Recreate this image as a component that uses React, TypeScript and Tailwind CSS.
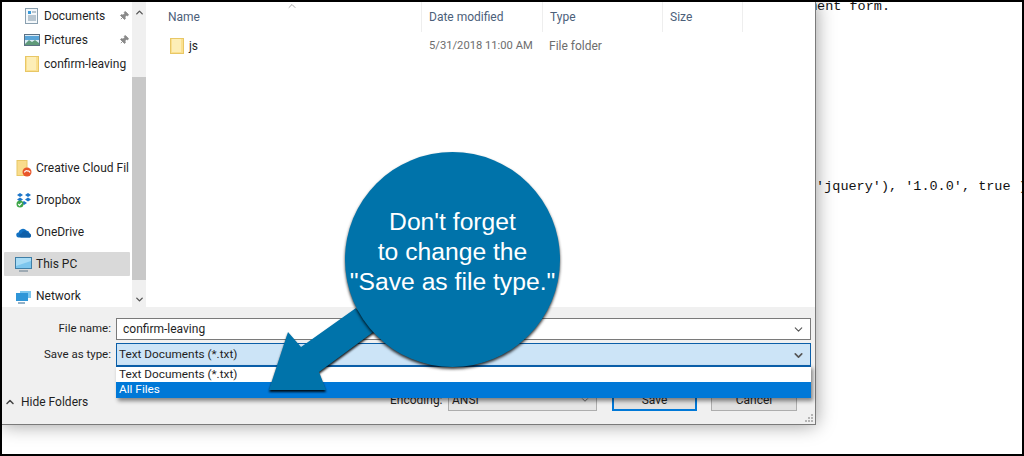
import { ChevronDown, ChevronUp, Pin } from "lucide-react"
import type { ReactNode } from "react"

const uiFont = { fontFamily: 'Roboto, "Open Sans", sans-serif' }

function FolderIcon({ size = 14 }: { size?: number }) {
  return (
    <svg width={size} height={size + 2} viewBox="0 0 14 16">
      <rect x="0.5" y="0.5" width="13" height="15" fill="#fbe08f" stroke="#e8c766" />
      <rect x="2" y="1" width="9" height="13" fill="#fdeeb7" />
    </svg>
  )
}

function DocumentsIcon() {
  return (
    <svg width="13" height="16" viewBox="0 0 13 16">
      <rect x="0.5" y="0.5" width="12" height="15" fill="#f4f8fb" stroke="#8aa0b0" />
      <path d="M3 3h3v3H3z" fill="#3a9ad9" />
      <path d="M7 4h4M3 8h8M3 10h8M3 12h8" stroke="#7d93a5" strokeWidth="1" />
    </svg>
  )
}

function PicturesIcon() {
  return (
    <svg width="16" height="12" viewBox="0 0 16 12">
      <rect x="0.5" y="0.5" width="15" height="11" fill="#dcecf7" stroke="#5c7184" />
      <path d="M1 2h14v4H1z" fill="#5aa5d8" />
      <path d="M1 10l4-4 3 2 3-2 4 3v2H1z" fill="#5f9a7a" />
    </svg>
  )
}

function CreativeCloudIcon() {
  return (
    <svg width="16" height="17" viewBox="0 0 16 17">
      <rect x="1" y="0.5" width="10" height="15" fill="#f9dc8c" stroke="#e8c766" />
      <circle cx="11" cy="12" r="4.5" fill="#e8562a" />
      <path d="M8.5 12.5a2 2 0 0 1 3-1.5 2 2 0 0 1 2.5 1.5" fill="none" stroke="#fff" strokeWidth="1.2" />
    </svg>
  )
}

function DropboxIcon() {
  return (
    <svg width="16" height="16" viewBox="0 0 16 16">
      <path d="M4 1l3 2-3 2-3-2zM12 1l3 2-3 2-3-2zM4 5.5l3 2-3 2-3-2zM12 5.5l3 2-3 2-3-2zM8 9l3 2-3 2-3-2z" fill="#1b75c9" />
      <circle cx="4" cy="12" r="3.5" fill="#3fa648" />
      <path d="M2.3 12l1.2 1.3 2.2-2.5" fill="none" stroke="#fff" strokeWidth="1.2" />
    </svg>
  )
}

function OneDriveIcon() {
  return (
    <svg width="16" height="11" viewBox="0 0 16 11">
      <path d="M3 10.5a2.5 2.5 0 0 1-.5-5A4.5 4.5 0 0 1 10.5 3.5a3.5 3.5 0 0 1 3 3.5 2 2 0 0 1 .5 3.5z" fill="#1272c4" />
      <path d="M5 10.5a2 2 0 0 1 .5-4 3.5 3.5 0 0 1 6.5-.5 2.5 2.5 0 0 1 2 4.5z" fill="#0f5fa8" />
    </svg>
  )
}

function ThisPcIcon() {
  return (
    <svg width="17" height="15" viewBox="0 0 17 15">
      <rect x="0.5" y="0.5" width="16" height="11" fill="#7cc6ee" stroke="#3f7ea6" />
      <path d="M1 1h15v3L1 9z" fill="#a8dcf6" />
      <path d="M4 14h9" stroke="#8a9aa6" strokeWidth="1.5" />
    </svg>
  )
}

function NetworkIcon() {
  return (
    <svg width="17" height="16" viewBox="0 0 17 16">
      <path d="M1 5h12v8H1z" fill="#2f96d8" />
      <path d="M5 3h11v7h-3V5H5z" fill="#7cc6ee" />
      <path d="M3 15h7" stroke="#4a7fa5" strokeWidth="1.2" />
    </svg>
  )
}

function NavItem({ icon, label, selected, compact }: { icon: ReactNode; label: string; selected?: boolean; compact?: boolean }) {
  return (
    <div className={`flex items-center overflow-hidden whitespace-nowrap text-[12px] text-[#1f1f1f] ${compact ? "h-6 pl-[17px]" : selected ? "my-[1px] ml-[2px] mr-[2px] h-6 rounded-[1px] bg-[#d9d9d9] pl-[7px]" : "mr-[3px] h-[26px] pl-[9px]"}`}>
      <span className="flex w-[25px] shrink-0 items-center justify-center">{icon}</span>
      {label}
    </div>
  )
}

function PinIcon() {
  return <Pin size={10} className="fill-[#8a8a8a] text-[#8a8a8a] rotate-45" />
}

function Column({ label, width }: { label: string; width: string }) {
  return (
    <div className={`flex h-[30px] items-center border-r border-[#eeeeee] pl-[7px] text-[12px] text-[#4c607a] ${width}`}>{label}</div>
  )
}

export default function App() {
  return (
    <div className="relative flex h-[456px] w-[1024px] overflow-hidden border-2 border-black bg-white" style={uiFont}>
      {/* save dialog */}
      <div className="relative z-10 flex h-[423px] w-[814px] shrink-0 flex-col border-b border-r border-[#7a7a7a] bg-white shadow-[0_0_18px_rgba(0,0,0,0.4)]">
        <div className="flex h-[305px]">
          <div className="w-[130px] overflow-hidden pt-[2px]">
            <div className="relative">
              <div className="flex items-center justify-between pr-[2px]">
                <div className="min-w-0 flex-1"><NavItem compact icon={<DocumentsIcon />} label="Documents" /></div>
                <span className="mr-[1px]"><PinIcon /></span>
              </div>
              <div className="flex items-center justify-between pr-[2px]">
                <div className="min-w-0 flex-1"><NavItem compact icon={<PicturesIcon />} label="Pictures" /></div>
                <span className="mr-[1px]"><PinIcon /></span>
              </div>
              <NavItem compact icon={<FolderIcon />} label="confirm-leaving" />
            </div>
            <div className="mt-[79px] flex flex-col gap-[6px]">
              <NavItem icon={<CreativeCloudIcon />} label="Creative Cloud Files" />
              <NavItem icon={<DropboxIcon />} label="Dropbox" />
              <NavItem icon={<OneDriveIcon />} label="OneDrive" />
              <NavItem selected icon={<ThisPcIcon />} label="This PC" />
              <NavItem icon={<NetworkIcon />} label="Network" />
            </div>
          </div>
          <div className="flex w-[14px] flex-col bg-[#f0f0f0]">
            <div className="flex h-[20px] items-center justify-center"><ChevronUp size={11} strokeWidth={3} className="text-[#555555]" /></div>
            <div className="mt-[55px] w-full flex-1 bg-[#c8c8c8]" />
            <div className="flex h-[27px] items-end justify-center pb-[2px]"><ChevronDown size={11} strokeWidth={3} className="text-[#555555]" /></div>
          </div>
          <div className="relative flex-1 pl-[15px]">
            <ChevronUp size={12} className="absolute left-[140px] top-[-2px] text-[#a8a8a8]" />
            <div className="flex">
              <Column label="Name" width="w-[261px]" />
              <Column label="Date modified" width="w-[121px]" />
              <Column label="Type" width="w-[120px]" />
              <Column label="Size" width="w-[80px]" />
            </div>
            <div className="mt-[2px] flex h-[24px] items-center text-[12px] text-[#6d6d6d]">
              <div className="flex w-[261px] items-center pl-[9px] text-[#1f1f1f]">
                <FolderIcon />
                <span className="ml-[5px]">js</span>
              </div>
              <div className="w-[121px] pl-[7px] text-[11.2px]">5/31/2018 11:00 AM</div>
              <div className="pl-[6px]">File folder</div>
            </div>
          </div>
        </div>

        <div className="relative flex-1 bg-[#f0f0f0] pr-[4px] pt-[11px]">
          <div className="flex h-[22px] items-center">
            <div className="w-[110px] pr-[1px] text-right text-[11.5px] text-[#1f1f1f]">File name:</div>
            <div className="ml-[4px] flex h-full flex-1 items-center justify-between border border-[#7a7a7a] bg-white pl-[6px] pr-[5px] text-[12px] text-[#1f1f1f]">
              confirm-leaving
              <ChevronDown size={13} className="text-[#555555]" />
            </div>
          </div>
          <div className="mt-[3px] flex h-[24px] items-center">
            <div className="w-[110px] pr-[1px] text-right text-[11.5px] text-[#1f1f1f]">Save as type:</div>
            <div className="ml-[4px] flex h-full flex-1 items-center justify-between border border-[#0a5ea8] bg-[#cce4f7] pl-[2px] pr-[5px] text-[11.8px] text-[#1f1f1f]">
              Text Documents (*.txt)
              <ChevronDown size={13} strokeWidth={3} className="text-[#555555]" />
            </div>
          </div>
          <div className="mt-[22px] flex h-[22px] items-center text-[12px] text-[#1f1f1f]">
            <div className="flex w-[388px] items-center pl-[2px] pt-[4px]">
              <ChevronUp size={12} strokeWidth={3} className="text-[#444444]" />
              <span className="ml-[5px]">Hide Folders</span>
            </div>
            <span className="w-[58px]">Encoding:</span>
            <div className="flex h-full w-[149px] items-center justify-between border border-[#adadad] bg-[#e5e5e5] pl-[3px] pr-[6px]">
              ANSI
              <ChevronDown size={10} className="text-[#555555]" />
            </div>
            <button className="ml-[15px] h-full w-[85px] border-2 border-[#0078d7] bg-[#e1e1e1] text-[12px]">Save</button>
            <button className="ml-[14px] h-full w-[86px] border border-[#adadad] bg-[#e1e1e1] text-[12px]">Cancel</button>
          </div>
          <div className="absolute bottom-[2px] right-[2px] grid grid-cols-3 gap-[1px]">
            <span /><span /><span className="h-[2px] w-[2px] bg-[#b5b5b5]" />
            <span /><span className="h-[2px] w-[2px] bg-[#b5b5b5]" /><span className="h-[2px] w-[2px] bg-[#b5b5b5]" />
            <span className="h-[2px] w-[2px] bg-[#b5b5b5]" /><span className="h-[2px] w-[2px] bg-[#b5b5b5]" /><span className="h-[2px] w-[2px] bg-[#b5b5b5]" />
          </div>

          {/* open dropdown */}
          <div className="absolute left-[114px] top-[58px] w-[695px] border-t-2 border-[#0a5ea8] bg-white text-[11.8px] text-[#1f1f1f] shadow-[2px_3px_4px_rgba(0,0,0,0.45)]">
            <div className="flex h-[15px] items-center pl-[3px]">Text Documents (*.txt)</div>
            <div className="flex h-[16px] items-center bg-[#0078d7] pl-[3px] text-white">All Files</div>
          </div>
        </div>
      </div>

      {/* code editor behind the dialog */}
      <div className="flex-1 overflow-hidden whitespace-pre text-[13.5px] leading-[16px] text-[#111111]" style={{ fontFamily: '"Liberation Mono", monospace' }}>
        <div className="ml-[-7px] mt-[-3px]">ment form.</div>
        <div className="ml-[-8px] mt-[164px]">('jquery'), '1.0.0', true )</div>
      </div>

      {/* callout */}
      <svg className="absolute left-[-2px] top-[-2px] z-20 drop-shadow-[0_2px_1px_rgba(0,0,0,0.9)]" width="1024" height="456" viewBox="0 0 1024 456">
        <path d="M356 308L301 347L288 332L269 390L326 390L319 372L376 330Z" fill="#0073aa" />
      </svg>
      <div className="absolute left-[343px] top-[150px] z-20 flex h-[215px] w-[215px] flex-col items-center justify-center rounded-full bg-[#0073aa] pb-[15px] text-center text-[24.7px] leading-[30px] text-white shadow-[0_2px_3px_rgba(0,0,0,0.8)]" style={{ fontFamily: '"Liberation Sans", Arial, sans-serif' }}>
        <span>Don't forget</span>
        <span>to change the</span>
        <span className="whitespace-nowrap">"Save as file type."</span>
      </div>
    </div>
  )
}
